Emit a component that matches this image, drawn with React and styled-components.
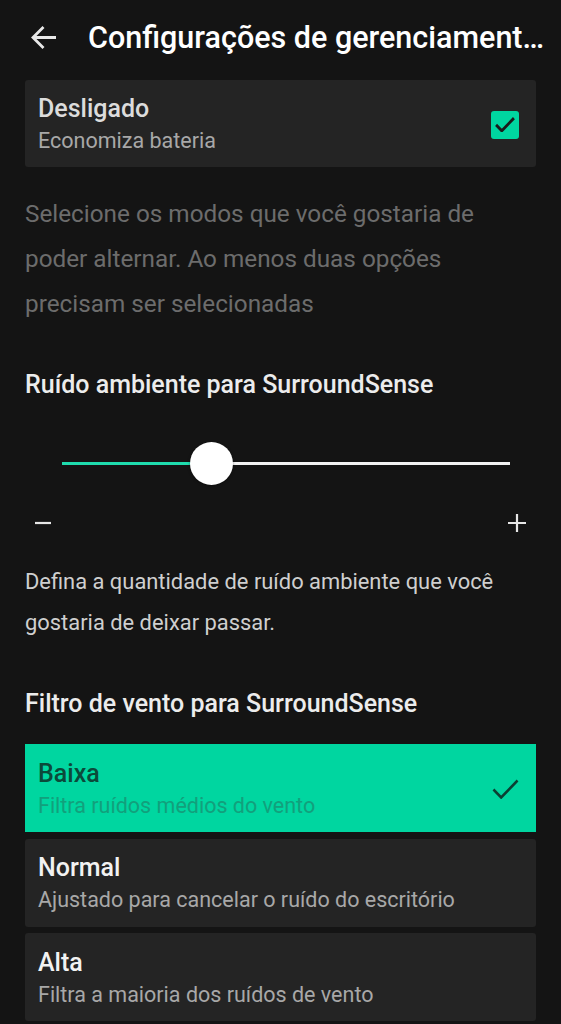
import React from "react";
import styled, { createGlobalStyle } from "styled-components";

const Global = createGlobalStyle`
  html, body { margin: 0; padding: 0; background: #141414; }
  body { font-family: Roboto, "Noto Sans", sans-serif; -webkit-font-smoothing: antialiased; }
  #root { width: 561px; min-height: 1024px; background: #141414; }
`;

const Page = styled.div`
  display: flex;
  flex-direction: column;
  width: 561px;
  height: 1024px;
  overflow: hidden;
  background: #141414;
`;

const Header = styled.header`
  display: flex;
  align-items: center;
  height: 75px;
  padding: 0 8px 0 28px;
  box-sizing: border-box;
`;

const BackButton = styled.button`
  display: flex;
  align-items: center;
  justify-content: center;
  width: 30px;
  height: 30px;
  padding: 0;
  margin-right: 30px;
  border: 0;
  background: transparent;
  color: #e8e8e8;
`;

const Title = styled.h1`
  flex: 1;
  min-width: 0;
  margin: 0;
  font-size: 30.5px;
  font-weight: 500;
  color: #ffffff;
  white-space: nowrap;
`;

const Content = styled.div`
  display: flex;
  flex-direction: column;
  padding: 5px 25px 0;
`;

const Card = styled.div`
  display: flex;
  align-items: center;
  height: ${(p) => p.$h || 87}px;
  padding: 2px 17px 0 13px;
  box-sizing: border-box;
  background: ${(p) => (p.$active ? "#00d6a0" : "#242424")};
  border-radius: ${(p) => (p.$active ? 0 : 3)}px;
`;

const CardText = styled.div`
  flex: 1;
  display: flex;
  flex-direction: column;
  gap: 3px;
`;

const CardTitle = styled.div`
  font-size: 25px;
  font-weight: 500;
  line-height: 30px;
  color: ${(p) => (p.$active ? "#0b4a3a" : p.$muted ? "#dcdcdc" : "#f2f2f2")};
`;

const CardSub = styled.div`
  font-size: 21.5px;
  line-height: 28px;
  color: ${(p) => (p.$active ? "#12a07c" : "#a8a8a8")};
`;

const CheckBox = styled.div`
  width: 28px;
  height: 28px;
  border-radius: 3px;
  background: #00d6a0;
  display: flex;
  align-items: center;
  justify-content: center;
`;

const Description = styled.p`
  margin: 23.5px 0 0;
  font-size: 24.3px;
  line-height: 45px;
  color: #6c6c6c;
`;

const SectionHeading = styled.h2`
  margin: ${(p) => p.$mt}px 0 0;
  font-size: 25px;
  font-weight: 500;
  line-height: 30px;
  color: #ececec;
`;

const SliderArea = styled.div`
  padding: 61.5px 26px 0 37px;
`;

const Track = styled.div`
  position: relative;
  height: 3px;
  background: #f2f2f2;
`;

const TrackFill = styled.div`
  height: 100%;
  background: #1fdcae;
`;

const Thumb = styled.div`
  position: absolute;
  top: 50%;
  width: 43px;
  height: 43px;
  margin: -21.5px 0 0 -21.5px;
  border-radius: 50%;
  background: #ffffff;
  box-shadow: 0 1px 3px rgba(0, 0, 0, 0.4);
`;

const StepRow = styled.div`
  display: flex;
  justify-content: space-between;
  align-items: center;
  margin-top: 43.5px;
  padding: 0 10px 0 10px;
  height: 30px;
  color: #e6e6e6;
`;

const Helper = styled.p`
  margin: 22.5px 0 0;
  font-size: 21.9px;
  line-height: 41px;
  color: #cfcfcf;
`;

const OptionList = styled.div`
  display: flex;
  flex-direction: column;
  gap: 6.5px;
  margin-top: 25px;
`;

const Check = ({ color, w = 22, h = 22, width = 3 }) => (
  <svg width={w} height={h} viewBox="0 0 28 20" fill="none" preserveAspectRatio="none">
    <path d="M1.5 10.5l8 8L26.5 1.5" stroke={color} strokeWidth={width} />
  </svg>
);

const options = [
  { title: "Baixa", sub: "Filtra ruídos médios do vento", active: true },
  { title: "Normal", sub: "Ajustado para cancelar o ruído do escritório" },
  { title: "Alta", sub: "Filtra a maioria dos ruídos de vento" },
];

export default function App() {
  const value = 33.3;
  return (
    <Page>
      <Global />
      <Header>
        <BackButton aria-label="Voltar">
          <svg width="27" height="25" viewBox="0 0 27 25" fill="none">
            <path d="M26 12.5H3M13.5 2L3 12.5 13.5 23" stroke="#e8e8e8" strokeWidth="2.8" />
          </svg>
        </BackButton>
        <Title>Configurações de gerenciament…</Title>
      </Header>
      <Content>
        <Card>
          <CardText>
            <CardTitle $muted>Desligado</CardTitle>
            <CardSub>Economiza bateria</CardSub>
          </CardText>
          <CheckBox>
            <Check color="#1a1a1a" w={20} h={15} width={3.8} />
          </CheckBox>
        </Card>
        <Description>
          Selecione os modos que você gostaria de poder alternar. Ao menos duas opções precisam ser selecionadas
        </Description>
        <SectionHeading $mt={44.5}>Ruído ambiente para SurroundSense</SectionHeading>
        <SliderArea>
          <Track>
            <TrackFill style={{ width: `${value}%` }} />
            <Thumb style={{ left: `${value}%` }} />
          </Track>
        </SliderArea>
        <StepRow>
          <svg width="16" height="16" viewBox="0 0 16 16">
            <path d="M0 8h16" stroke="#e6e6e6" strokeWidth="2.2" />
          </svg>
          <svg width="18" height="18" viewBox="0 0 18 18">
            <path d="M0 9h18M9 0v18" stroke="#e6e6e6" strokeWidth="2.2" />
          </svg>
        </StepRow>
        <Helper>Defina a quantidade de ruído ambiente que você gostaria de deixar passar.</Helper>
        <SectionHeading $mt={46.5}>Filtro de vento para SurroundSense</SectionHeading>
        <OptionList>
          {options.map((o) => (
            <Card key={o.title} $active={o.active} $h={88}>
              <CardText>
                <CardTitle $active={o.active}>{o.title}</CardTitle>
                <CardSub $active={o.active}>{o.sub}</CardSub>
              </CardText>
              {o.active && <Check color="#0b3f33" w={27} h={20} width={2.6} />}
            </Card>
          ))}
        </OptionList>
      </Content>
    </Page>
  );
}
